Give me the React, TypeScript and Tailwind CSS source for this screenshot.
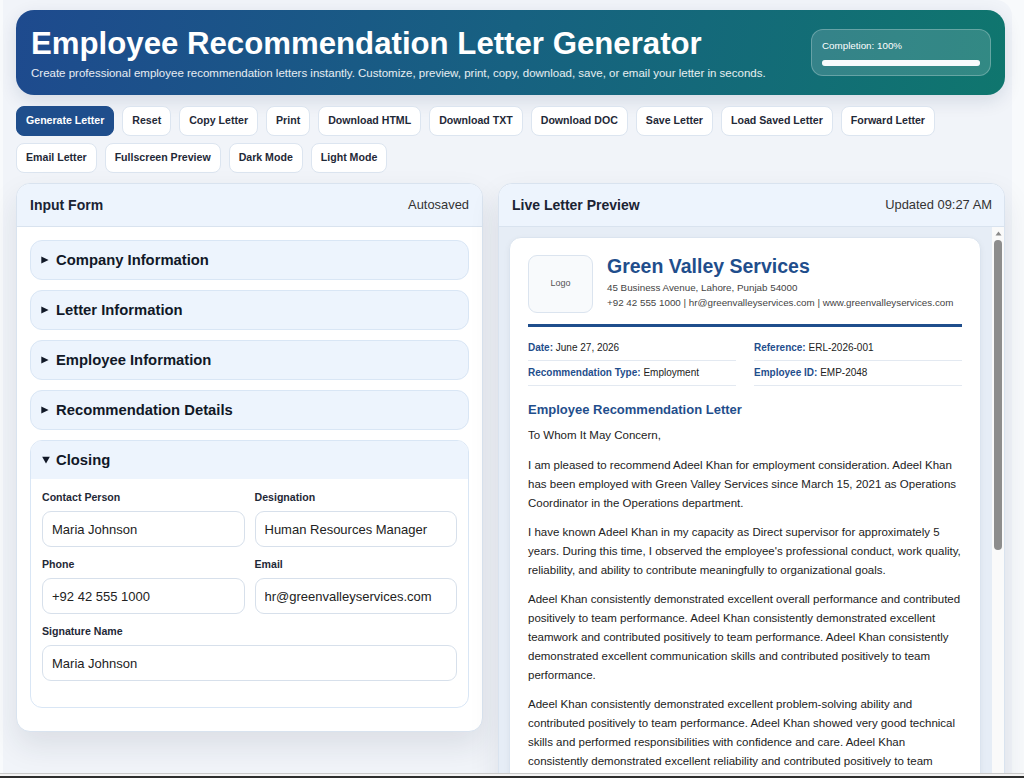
import React from "react";

const row1 = [
  "Generate Letter",
  "Reset",
  "Copy Letter",
  "Print",
  "Download HTML",
  "Download TXT",
  "Download DOC",
  "Save Letter",
  "Load Saved Letter",
  "Forward Letter",
];
const row2 = ["Email Letter", "Fullscreen Preview", "Dark Mode", "Light Mode"];

function Btn({ label, primary }: { label: string; primary?: boolean }) {
  return (
    <button
      className={
        primary
          ? "h-[30px] px-[9px] rounded-[8px] bg-[#1f4e8c] border border-[#1f4e8c] text-white text-[10.6px] font-bold whitespace-nowrap"
          : "h-[30px] px-[9px] rounded-[8px] bg-white border border-[#dce5f0] text-[#1f2937] text-[10.6px] font-bold whitespace-nowrap"
      }
    >
      {label}
    </button>
  );
}

function Acc({ title }: { title: string }) {
  return (
    <div className="h-[40px] rounded-[12px] bg-[#edf4fd] border border-[#d9e6f5] flex items-center pl-[10px]">
      <svg width="8" height="8" viewBox="0 0 8 8" className="mr-[7px]">
        <polygon points="0.3,0.6 7.6,4 0.3,7.4" fill="#111827" />
      </svg>
      <span className="text-[14.8px] font-bold text-[#111827] leading-none">{title}</span>
    </div>
  );
}

function Field({ label, value, wide }: { label: string; value: string; wide?: boolean }) {
  return (
    <div className={wide ? "col-span-2 flex flex-col" : "flex flex-col"}>
      <label className="text-[10.6px] font-bold text-[#1f2937] leading-[14px]">{label}</label>
      <input
        readOnly
        value={value}
        className="mt-[7px] h-[36px] rounded-[9px] border border-[#d7e0eb] bg-white pl-[9px] text-[13px] text-[#222] outline-none"
      />
    </div>
  );
}

function Meta({ label, value }: { label: string; value: string }) {
  return (
    <div className="h-[25px] border-b border-[#e3e9f1] flex items-center text-[10px] leading-none">
      <span className="font-bold text-[#1f4e8c]">{label}</span>
      <span className="text-[#222]">&nbsp;{value}</span>
    </div>
  );
}

const paras = [
  "I am pleased to recommend Adeel Khan for employment consideration. Adeel Khan has been employed with Green Valley Services since March 15, 2021 as Operations Coordinator in the Operations department.",
  "I have known Adeel Khan in my capacity as Direct supervisor for approximately 5 years. During this time, I observed the employee's professional conduct, work quality, reliability, and ability to contribute meaningfully to organizational goals.",
  "Adeel Khan consistently demonstrated excellent overall performance and contributed positively to team performance. Adeel Khan consistently demonstrated excellent teamwork and contributed positively to team performance. Adeel Khan consistently demonstrated excellent communication skills and contributed positively to team performance.",
  "Adeel Khan consistently demonstrated excellent problem-solving ability and contributed positively to team performance. Adeel Khan showed very good technical skills and performed responsibilities with confidence and care. Adeel Khan consistently demonstrated excellent reliability and contributed positively to team performance.",
  "I recommend Adeel Khan without reservation and am confident that the employee will be a valuable addition to any organization.",
];

export default function App() {
  return (
    <div className="h-[778px] flex flex-col bg-[#f8fafc] overflow-hidden font-['Liberation_Sans',Arial,Helvetica,sans-serif]">
      <div className="flex-1 min-h-0 overflow-hidden">
        <div className="ml-[3px] w-[1009px] h-full bg-[#f1f4f9] rounded-tr-[16px] pl-[13px] pt-[10px]">
          {/* Header */}
          <header className="w-[989px] h-[85px] rounded-[18px] bg-[linear-gradient(100deg,#1e4a8e_0%,#176181_50%,#0f766e_100%)] flex items-center justify-between pl-[15px] pr-[14px] shadow-[0_6px_18px_rgba(15,40,80,0.12)]">
            <div className="flex flex-col">
              <h1 className="text-[31.2px] leading-[36px] font-bold text-white whitespace-nowrap">
                Employee Recommendation Letter Generator
              </h1>
              <p className="mt-[4px] text-[11.5px] leading-[14px] text-white/90 whitespace-nowrap">
                Create professional employee recommendation letters instantly. Customize, preview, print, copy, download, save, or email your letter in seconds.
              </p>
            </div>
            <div className="w-[180px] h-[47px] rounded-[12px] bg-white/15 border border-white/25 px-[10px] pt-[9.5px]">
              <div className="text-[9.8px] leading-[12px] text-white">Completion: 100%</div>
              <div className="mt-[8px] h-[6px] rounded-full bg-white/30">
                <div className="h-full w-full rounded-full bg-[#f8fafc]" />
              </div>
            </div>
          </header>

          {/* Toolbar */}
          <div className="mt-[11px] flex flex-col gap-[7px]">
            <div className="flex gap-[8px]">
              {row1.map((b, i) => (
                <Btn key={b} label={b} primary={i === 0} />
              ))}
            </div>
            <div className="flex gap-[8px]">
              {row2.map((b) => (
                <Btn key={b} label={b} />
              ))}
            </div>
          </div>

          {/* Panels */}
          <div className="mt-[10px] flex items-start gap-[15px]">
            {/* Left */}
            <section className="w-[467px] rounded-[14px] bg-white border border-[#d9e3ef] overflow-hidden shadow-[0_14px_30px_rgba(30,41,59,0.10)]">
              <div className="h-[43px] bg-[#edf4fd] border-b border-[#d9e3ef] flex items-center justify-between pl-[13px] pr-[13px]">
                <span className="text-[14px] font-bold text-[#1b2333]">Input Form</span>
                <span className="text-[12.9px] text-[#333]">Autosaved</span>
              </div>
              <div className="px-[13px] pt-[13px] pb-[23px] flex flex-col gap-[10px]">
                <Acc title="Company Information" />
                <Acc title="Letter Information" />
                <Acc title="Employee Information" />
                <Acc title="Recommendation Details" />
                <div className="rounded-[12px] border border-[#d9e6f5] overflow-hidden bg-white">
                  <div className="h-[38px] bg-[#edf4fd] flex items-center pl-[11px]">
                    <svg width="8" height="8" viewBox="0 0 8 8" className="mr-[6px]">
                      <polygon points="0.2,0.8 7.8,0.8 4,7.6" fill="#111827" />
                    </svg>
                    <span className="text-[14.8px] font-bold text-[#111827] leading-none">Closing</span>
                  </div>
                  <div className="pt-[11px] px-[11px] pb-[26px] grid grid-cols-2 gap-x-[10px] gap-y-[10px]">
                    <Field label="Contact Person" value="Maria Johnson" />
                    <Field label="Designation" value="Human Resources Manager" />
                    <Field label="Phone" value="+92 42 555 1000" />
                    <Field label="Email" value="hr@greenvalleyservices.com" />
                    <Field label="Signature Name" value="Maria Johnson" wide />
                  </div>
                </div>
              </div>
            </section>

            {/* Right */}
            <section className="w-[507px] h-[640px] rounded-[14px] bg-white border border-[#d9e3ef] overflow-hidden flex flex-col shadow-[0_14px_30px_rgba(30,41,59,0.10)]">
              <div className="h-[43px] shrink-0 bg-[#edf4fd] border-b border-[#d9e3ef] flex items-center justify-between pl-[13px] pr-[12px]">
                <span className="text-[14px] font-bold text-[#1b2333]">Live Letter Preview</span>
                <span className="text-[12.9px] text-[#333]">Updated 09:27 AM</span>
              </div>
              <div className="flex-1 min-h-0 flex">
                <div className="flex-1 min-w-0 bg-[#e6edf6] pl-[10px] pr-[10px] pt-[10px] overflow-hidden">
                  <div className="w-[472px] rounded-[12px] bg-white border border-[#dbe4ef] px-[18px] pt-[17px] pb-[18px] shadow-[0_2px_6px_rgba(15,23,42,0.05)]">
                    <div className="flex items-start">
                      <div className="w-[65px] h-[58px] shrink-0 rounded-[9px] border border-[#dbe4ef] bg-[#f8fafc] flex items-center justify-center text-[9px] text-[#555]">
                        Logo
                      </div>
                      <div className="ml-[14px] flex flex-col">
                        <div className="text-[19.5px] leading-[23px] font-bold text-[#1f4e8c]">Green Valley Services</div>
                        <div className="mt-[2px] text-[9.8px] leading-[15px] text-[#444]">
                          45 Business Avenue, Lahore, Punjab 54000
                        </div>
                        <div className="text-[9.8px] leading-[15px] text-[#444]">
                          +92 42 555 1000 | hr@greenvalleyservices.com | www.greenvalleyservices.com
                        </div>
                      </div>
                    </div>
                    <div className="mt-[11px] h-[3px] bg-[#1f4e8c]" />
                    <div className="mt-[9px] grid grid-cols-2 gap-x-[18px]">
                      <Meta label="Date:" value="June 27, 2026" />
                      <Meta label="Reference:" value="ERL-2026-001" />
                      <Meta label="Recommendation Type:" value="Employment" />
                      <Meta label="Employee ID:" value="EMP-2048" />
                    </div>
                    <h2 className="mt-[16px] text-[13px] leading-[16px] font-bold text-[#1f4e8c]">
                      Employee Recommendation Letter
                    </h2>
                    <p className="mt-[8px] text-[11.5px] leading-[19px] text-[#222]">To Whom It May Concern,</p>
                    {paras.map((p, i) => (
                      <p key={i} className={i === 0 ? "mt-[11px] text-[11.5px] leading-[19px] text-[#222]" : "mt-[10px] text-[11.5px] leading-[19px] text-[#222]"}>
                        {p}
                      </p>
                    ))}
                  </div>
                </div>
                <div className="w-[12px] shrink-0 bg-[#fafafa] flex flex-col items-center pt-[4px]">
                  <svg width="7" height="5" viewBox="0 0 7 5">
                    <polygon points="3.5,0.5 6.5,4.5 0.5,4.5" fill="#8a8a8a" />
                  </svg>
                  <div className="mt-[4px] w-[8px] h-[310px] rounded-full bg-[#8d8d8d]" />
                </div>
              </div>
            </section>
          </div>
        </div>
      </div>
      <div className="h-[1px] bg-[#c9c9c9]" />
      <div className="h-[2px] bg-[#f4f4f4]" />
      <div className="h-[2px] bg-[#2e2e2e]" />
    </div>
  );
}
